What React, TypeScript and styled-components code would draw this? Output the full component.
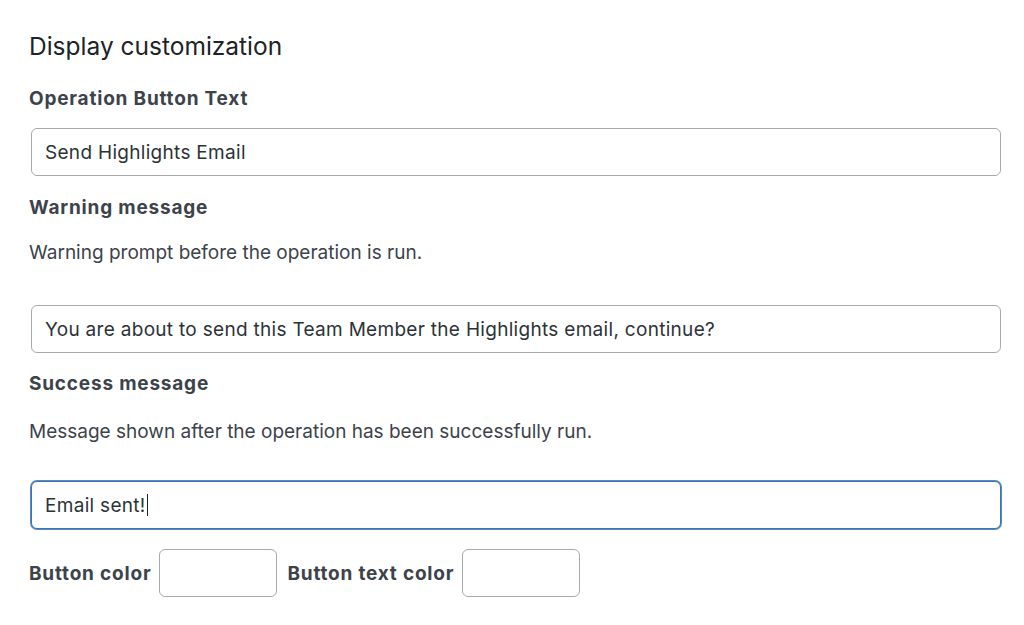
import React from "react";
import styled, { createGlobalStyle } from "styled-components";

const Global = createGlobalStyle`
  html, body { margin: 0; padding: 0; background: #fff; }
  body {
    font-family: Inter, "Open Sans", "Liberation Sans", sans-serif;
    color: #3c434a;
    -webkit-font-smoothing: antialiased;
  }
`;

const Page = styled.div`
  width: 974px;
  padding: 32px 21px 0 29px;
  display: flex;
  flex-direction: column;
`;

const Heading = styled.h2`
  margin: 0 0 26px;
  font-size: 24.5px;
  line-height: 28px;
  font-weight: 400;
  color: #1d2327;
`;

const Label = styled.div<{ $gap?: number }>`
  font-size: 19px;
  line-height: 24px;
  padding-top: 1px;
  font-weight: 700;
  letter-spacing: 0.8px;
  color: #3c434a;
  margin-bottom: ${(p) => (p.$gap ?? 18) - 1}px;
`;

const Description = styled.p<{ $gap?: number }>`
  margin: 0 0 ${(p) => p.$gap ?? 40}px;
  font-size: 19px;
  line-height: 24px;
  color: #3c434a;
`;

const Field = styled.div<{ $focused?: boolean; $gap?: number }>`
  box-sizing: border-box;
  margin: 0 2px ${(p) => p.$gap ?? 19}px;
  height: 48px;
  padding: 0 13px;
  display: flex;
  align-items: center;
  font-size: 19px;
  letter-spacing: 0.3px;
  color: #2c3338;
  background: #fff;
  border: 1px solid ${(p) => (p.$focused ? "#3d72b3" : "#a7aaad")};
  border-radius: 6px;
  box-shadow: ${(p) => (p.$focused ? "0 0 0 1px #5b88c0" : "none")};
  white-space: nowrap;
`;

const Caret = styled.span`
  display: inline-block;
  width: 1px;
  height: 22px;
  background: #1d2327;
  margin-left: 1px;
`;

const ColorRow = styled.div`
  display: flex;
  align-items: center;
  gap: 8px;
`;

const ColorLabel = styled.span`
  font-size: 19px;
  line-height: 24px;
  padding-top: 2px;
  font-weight: 700;
  letter-spacing: 0.8px;
  color: #3c434a;
`;

const Swatch = styled.div`
  box-sizing: border-box;
  width: 118px;
  height: 48px;
  border: 1px solid #a7aaad;
  border-radius: 6px;
  background: #fff;
  margin-right: 2px;
`;

export default function App() {
  return (
    <>
      <Global />
      <Page>
        <Heading>Display customization</Heading>

        <Label>Operation Button Text</Label>
        <Field>Send Highlights Email</Field>

        <Label $gap={22}>Warning message</Label>
        <Description>Warning prompt before the operation is run.</Description>
        <Field $gap={18}>
          You are about to send this Team Member the Highlights email, continue?
        </Field>

        <Label $gap={25}>Success message</Label>
        <Description $gap={37}>
          Message shown after the operation has been successfully run.
        </Description>
        <Field $focused $gap={20}>
          Email sent!
          <Caret />
        </Field>

        <ColorRow>
          <ColorLabel>Button color</ColorLabel>
          <Swatch />
          <ColorLabel>Button text color</ColorLabel>
          <Swatch />
        </ColorRow>
      </Page>
    </>
  );
}
